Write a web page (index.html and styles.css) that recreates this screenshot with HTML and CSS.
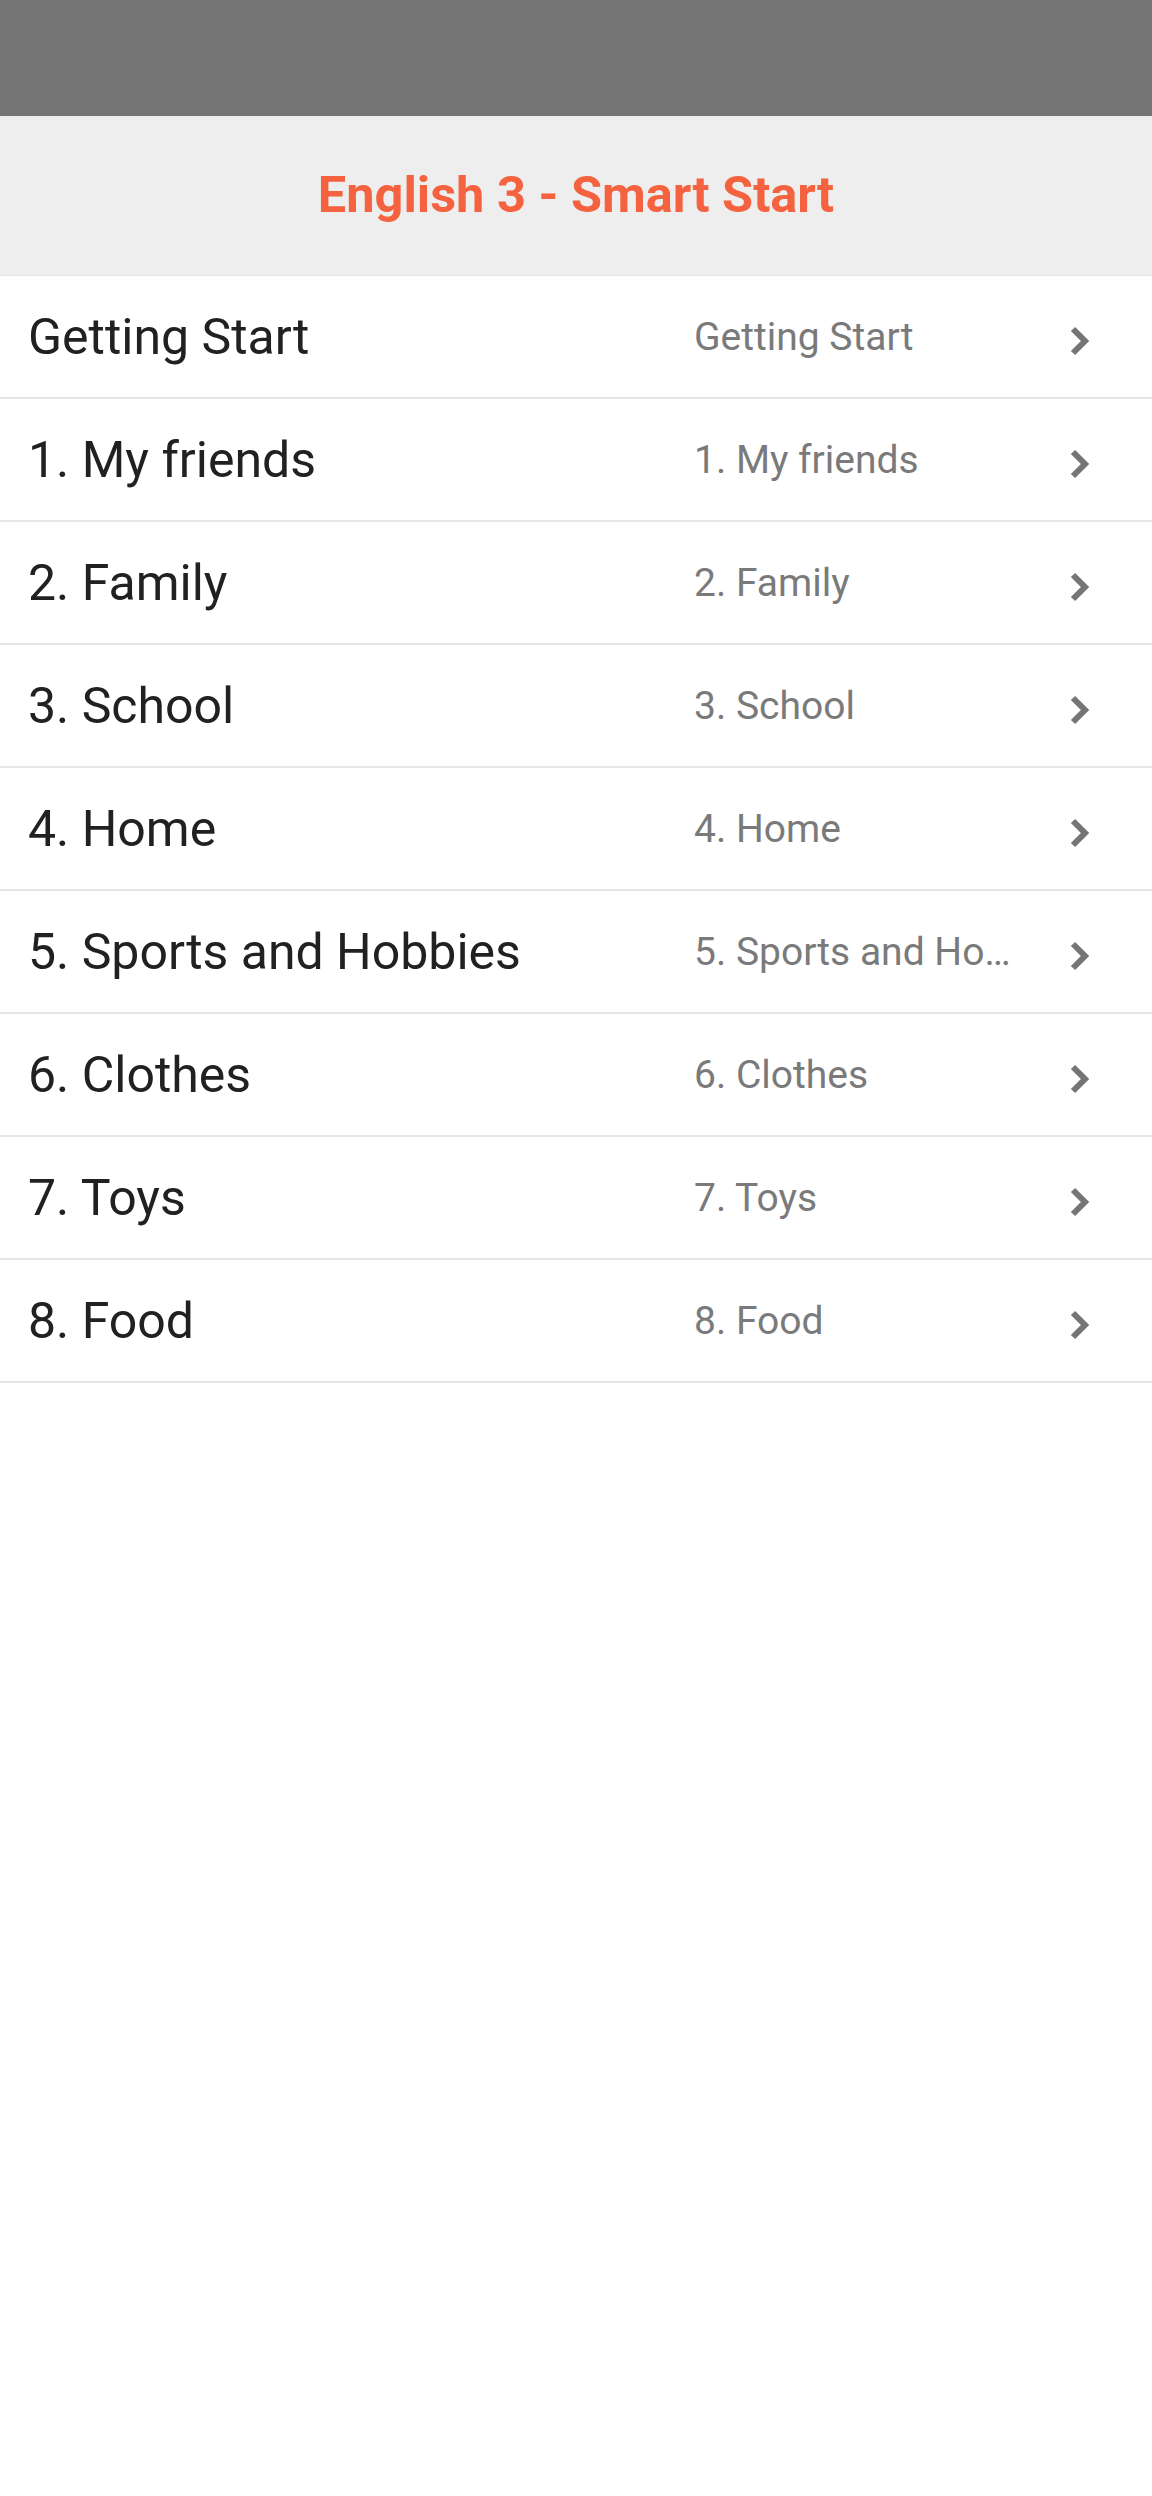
FILE: index.html
```html
<!DOCTYPE html>
<html lang="en">
<head>
<meta charset="utf-8">
<title>English 3 - Smart Start</title>
<link rel="stylesheet" href="styles.css">
</head>
<body>
<div class="status-bar"></div>
<header class="app-header">
  <h1 class="title">English 3 - Smart Start</h1>
</header>
<ul class="list">
  <li class="row"><span class="label">Getting Start</span><span class="detail">Getting Start</span><svg class="chev" viewBox="0 0 24 34" width="24" height="34"><polyline points="6,5 18,17 6,29"/></svg></li>
  <li class="row"><span class="label">1. My friends</span><span class="detail">1. My friends</span><svg class="chev" viewBox="0 0 24 34" width="24" height="34"><polyline points="6,5 18,17 6,29"/></svg></li>
  <li class="row"><span class="label">2. Family</span><span class="detail">2. Family</span><svg class="chev" viewBox="0 0 24 34" width="24" height="34"><polyline points="6,5 18,17 6,29"/></svg></li>
  <li class="row"><span class="label">3. School</span><span class="detail">3. School</span><svg class="chev" viewBox="0 0 24 34" width="24" height="34"><polyline points="6,5 18,17 6,29"/></svg></li>
  <li class="row"><span class="label">4. Home</span><span class="detail">4. Home</span><svg class="chev" viewBox="0 0 24 34" width="24" height="34"><polyline points="6,5 18,17 6,29"/></svg></li>
  <li class="row"><span class="label">5. Sports and Hobbies</span><span class="detail">5. Sports and Hobbies</span><svg class="chev" viewBox="0 0 24 34" width="24" height="34"><polyline points="6,5 18,17 6,29"/></svg></li>
  <li class="row"><span class="label">6. Clothes</span><span class="detail">6. Clothes</span><svg class="chev" viewBox="0 0 24 34" width="24" height="34"><polyline points="6,5 18,17 6,29"/></svg></li>
  <li class="row"><span class="label">7. Toys</span><span class="detail">7. Toys</span><svg class="chev" viewBox="0 0 24 34" width="24" height="34"><polyline points="6,5 18,17 6,29"/></svg></li>
  <li class="row"><span class="label">8. Food</span><span class="detail">8. Food</span><svg class="chev" viewBox="0 0 24 34" width="24" height="34"><polyline points="6,5 18,17 6,29"/></svg></li>
</ul>
</body>
</html>
```
FILE: styles.css
```css
html, body {
  margin: 0;
  padding: 0;
  background: #ffffff;
}
body {
  font-family: Roboto, "Noto Sans", "Liberation Sans", sans-serif;
  min-height: 2496px;
}
.status-bar {
  height: 116px;
  background: #757575;
}
.app-header {
  height: 160px;
  background: #eeeeee;
  display: flex;
  align-items: center;
  justify-content: center;
  box-sizing: border-box;
  border-bottom: 1px solid #e4e4e4;
}
.title {
  margin: 0;
  font-size: 50.5px;
  font-weight: 700;
  color: #f4623f;
  line-height: 1;
}
.list {
  list-style: none;
  margin: 0;
  padding: 0;
}
.row {
  display: flex;
  align-items: center;
  height: 121px;
  border-bottom: 2px solid #e6e6e6;
  padding-left: 28px;
}
.label {
  flex: 1;
  min-width: 0;
  font-size: 50px;
  color: #212121;
  white-space: nowrap;
}
.detail {
  width: 325px;
  font-size: 39px;
  color: #7a7a7a;
  white-space: nowrap;
  overflow: hidden;
  text-overflow: ellipsis;
}
.chev {
  margin-left: 48px;
  margin-right: 61px;
  margin-top: 8px;
  flex: none;
}
.chev polyline {
  fill: none;
  stroke: #757575;
  stroke-width: 6;
}
```
